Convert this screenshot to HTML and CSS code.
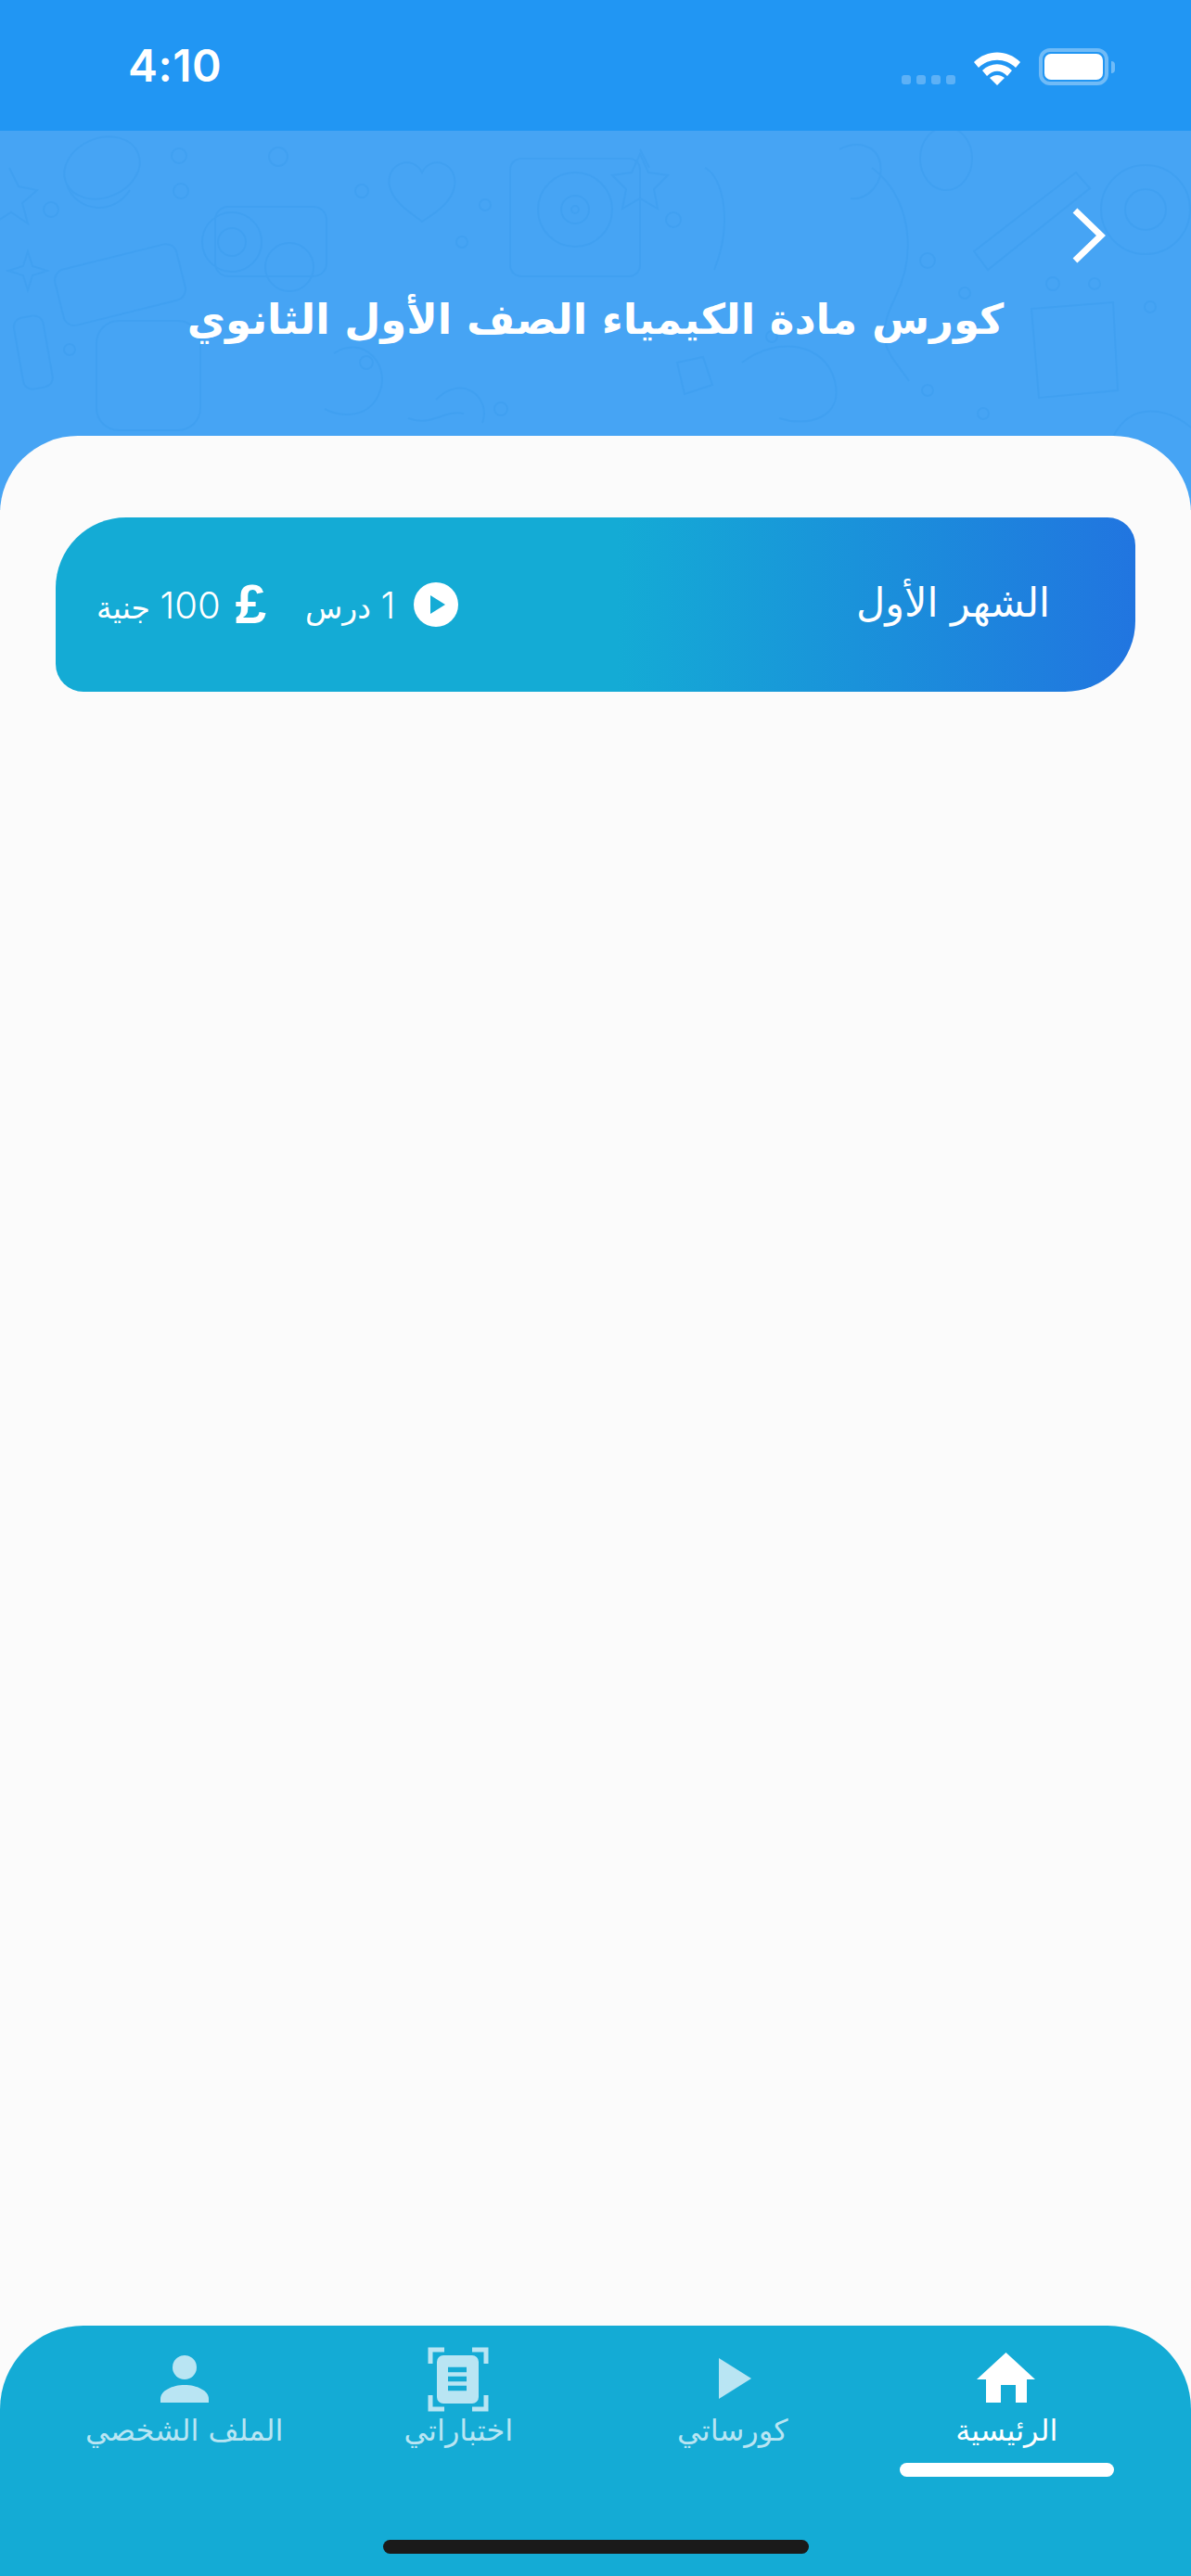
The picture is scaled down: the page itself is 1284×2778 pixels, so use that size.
FILE: index.html
```html
<!DOCTYPE html>
<html lang="ar" dir="rtl">
<head>
  <meta charset="UTF-8" />
  <meta name="viewport" content="width=device-width, initial-scale=1" />
  <title>كورس مادة الكيمياء</title>
  <link rel="stylesheet" href="styles.css">
</head>
<body>
  <div class="status-bar" dir="ltr">
    <span class="time">4:10</span>
    <div class="status-icons">
      <div class="signal"><i></i><i></i><i></i><i></i></div>
      <svg class="wifi" viewBox="0 0 52 38">
        <path d="M1 13 C15 -1 37 -1 51 13 L46 19 C35 8 17 8 6 19 Z" fill="#fff"/>
        <path d="M10 22 C19 13 33 13 42 22 L37 28 C30 21 22 21 15 28 Z" fill="#fff"/>
        <path d="M18 30 C23 26 29 26 34 30 L26 38 Z" fill="#fff"/>
      </svg>
      <div class="battery"><div class="battery-fill"></div></div>
      <div class="battery-tip"></div>
    </div>
  </div>

  <header class="course-header">
    <!-- faint doodles behind the title -->
    <svg class="doodles" viewBox="0 0 1284 409" preserveAspectRatio="none">
      <g fill="none" stroke="#40a0f1" stroke-width="2">
        <rect x="550" y="30" width="140" height="127" rx="12"/>
        <circle cx="620" cy="85" r="40"/>
        <circle cx="620" cy="85" r="15"/>
        <circle cx="620" cy="85" r="4"/>
        <path d="M690 25 l9 20 21 3 -15 15 4 21 -19 -11 -19 11 4 -21 -15 -15 21 -3 z"/>
        <path d="M455 45 c-10 -20 -40 -10 -35 15 c4 18 25 30 35 38 c12 -8 32 -20 35 -38 c4 -25 -25 -35 -35 -15 z"/>
        <rect x="232" y="82" width="120" height="75" rx="14"/>
        <circle cx="250" cy="120" r="32"/>
        <circle cx="250" cy="120" r="15"/>
        <circle cx="312" cy="147" r="26"/>
        <rect x="62" y="135" width="135" height="62" rx="12" transform="rotate(-14 130 166)"/>
        <rect x="104" y="205" width="112" height="118" rx="24"/>
        <ellipse cx="110" cy="40" rx="42" ry="32" transform="rotate(-22 110 40)"/>
        <path d="M72 58 c10 30 50 34 68 6"/>
        <circle cx="1235" cy="85" r="48"/>
        <circle cx="1235" cy="85" r="22"/>
        <path d="M1050 130 L1160 45 L1175 62 L1065 150 Z"/>
        <path d="M940 40 c40 30 50 90 25 140 s-5 60 15 90"/>
        <path d="M1112 192 L1200 185 L1205 280 L1120 288 Z"/>
        <path d="M905 20 c18 -10 40 -5 44 15 s-12 40 -32 38"/>
        <ellipse cx="1020" cy="30" rx="28" ry="34"/>
        <path d="M1200 330 c20 -40 60 -30 84 -10"/>
        <path d="M10 40 l10 20 20 4 -16 14 6 22 -18 -12 -16 10"/>
        <path d="M30 130 l5 16 16 5 -16 5 -5 16 -5 -16 -16 -5 16 -5 z"/>
        <rect x="20" y="200" width="32" height="78" rx="10" transform="rotate(-10 36 240)"/>
        <path d="M360 240 c30 -20 60 10 50 40 s-40 30 -60 20"/>
        <path d="M800 250 c40 -30 90 -20 100 20 s-30 50 -60 40"/>
        <path d="M470 290 c30 -30 60 0 50 25 M440 310 c25 10 40 -10 60 -5"/>
        <path d="M700 40 l-10 -20 M760 40 c20 10 30 60 10 110"/>
        <path d="M730 250 l28 -6 10 30 -30 10 z"/>
        <g>
          <circle cx="55" cy="85" r="8"/>
          <circle cx="193" cy="27" r="8"/>
          <circle cx="300" cy="28" r="10"/>
          <circle cx="390" cy="65" r="7"/>
          <circle cx="195" cy="65" r="8"/>
          <circle cx="75" cy="236" r="6"/>
          <circle cx="523" cy="80" r="6"/>
          <circle cx="498" cy="120" r="6"/>
          <circle cx="726" cy="96" r="8"/>
          <circle cx="832" cy="222" r="6"/>
          <circle cx="1000" cy="140" r="8"/>
          <circle cx="1040" cy="175" r="6"/>
          <circle cx="1135" cy="165" r="7"/>
          <circle cx="1180" cy="165" r="6"/>
          <circle cx="540" cy="300" r="7"/>
          <circle cx="395" cy="250" r="7"/>
          <circle cx="1240" cy="190" r="6"/>
          <circle cx="1000" cy="280" r="6"/>
          <circle cx="1060" cy="305" r="6"/>
        </g>
      </g>
    </svg>
    <div class="header-top">
      <svg class="back" viewBox="0 0 36 60"><path d="M3 3 L31 30 L3 57" fill="none" stroke="#fff" stroke-width="7"/></svg>
    </div>
    <h1 class="course-title">كورس مادة الكيمياء الصف الأول الثانوي</h1>
  </header>

  <main class="sheet">
    <div class="month-card">
      <span class="month-name">الشهر الأول</span>
      <div class="month-meta">
        <div class="meta-item">
          <svg class="play-circle" viewBox="0 0 48 48"><circle cx="24" cy="24" r="24" fill="#fff"/><path d="M18 14 L34 24 L18 34 Z" fill="#14abd5"/></svg>
          <span><span class="num">1</span> درس</span>
        </div>
        <div class="meta-item price">
          <span class="pound">£</span>
          <span><span class="num">100</span> جنية</span>
        </div>
      </div>
    </div>
  </main>

  <nav class="tab-bar">
    <div class="tabs">
      <a class="tab active">
        <svg class="tab-icon" viewBox="0 0 70 70"><path d="M34.5 6 L66 35 H57 V60 H45 V41 H29 V60 H13 V35 H3 Z" fill="currentColor"/></svg>
        <span class="tab-label">الرئيسية</span>
        <div class="tab-mark"></div>
      </a>
      <a class="tab">
        <svg class="tab-icon" viewBox="0 0 70 70"><path d="M20 12 L55 34 L20 56 Z" fill="currentColor"/></svg>
        <span class="tab-label">كورساتي</span>
      </a>
      <a class="tab">
        <svg class="tab-icon" viewBox="0 0 70 70">
          <path d="M5 18 V3 H20 M50 3 H65 V18 M5 52 V67 H20 M50 67 H65 V52" fill="none" stroke="currentColor" stroke-width="5"/>
          <rect x="12" y="9" width="45" height="52" rx="7" fill="currentColor"/>
          <path d="M24 24.5 H44 M24 34.5 H44 M24 44.5 H44" stroke="#14abd5" stroke-width="5.5"/>
        </svg>
        <span class="tab-label">اختباراتي</span>
      </a>
      <a class="tab">
        <svg class="tab-icon" viewBox="0 0 70 70"><ellipse cx="35" cy="22" rx="13" ry="13" fill="currentColor"/><path d="M9 60 V56 C9 47 22 41 35 41 C48 41 61 47 61 56 V60 Z" fill="currentColor"/></svg>
        <span class="tab-label">الملف الشخصي</span>
      </a>
    </div>
    <div class="home-indicator"></div>
  </nav>
</body>
</html>
```

FILE: styles.css
```css
* {
  margin: 0;
  padding: 0;
  box-sizing: border-box;
}
html, body {
  height: 100%;
}
body {
  display: flex;
  flex-direction: column;
  min-height: 100vh;
  background-color: #fbfbfb;
  color: #fff;
  font-family: "DejaVu Sans", sans-serif;
  overflow: hidden;
}

/* status bar */
.status-bar {
  height: 141px;
  flex-shrink: 0;
  background-color: #2196f3;
  display: flex;
  justify-content: space-between;
  align-items: center;
  padding: 2px 82px 0 138px;
}
.time {
  font-family: Inter, sans-serif;
  font-size: 48px;
  font-weight: 600;
  letter-spacing: 0.5px;
  margin-top: -3px;
}
.status-icons {
  display: flex;
  align-items: flex-end;
}
.signal {
  display: flex;
  gap: 6px;
  margin: 0 19px 1px 0;
}
.signal i {
  width: 10px;
  height: 10px;
  border-radius: 3px;
  background-color: #5db1f6;
}
.wifi {
  width: 52px;
  height: 38px;
  margin-right: 19px;
}
.battery {
  width: 75px;
  height: 40px;
  border: 4px solid #70bbf7;
  border-radius: 12px;
  padding: 2px;
}
.battery-fill {
  height: 100%;
  background-color: #fff;
  border-radius: 7px;
}
.battery-tip {
  width: 4px;
  height: 13px;
  background-color: #70bbf7;
  border-radius: 0 6px 6px 0;
  margin: 0 0 13px 3px;
}

/* header */
.course-header {
  position: relative;
  height: 409px;
  flex-shrink: 0;
  background-color: #46a4f4;
  padding: 83px 92px 0 0;
}
.doodles {
  position: absolute;
  inset: 0;
  width: 100%;
  height: 100%;
}
.header-top {
  position: relative;
  display: flex;
}
.back {
  width: 36px;
  height: 60px;
}
.course-title {
  position: relative;
  margin: 26px 0 0 0;
  margin-right: -92px;
  text-align: center;
  font-size: 45px;
  font-weight: 700;
  line-height: 70px;
}

/* content */
.sheet {
  position: relative;
  flex: 1;
  margin-top: -80px;
  padding: 88px 60px 0;
  background-color: #fbfbfb;
  border-radius: 84px 84px 0 0;
}
.month-card {
  height: 188px;
  display: flex;
  justify-content: space-between;
  align-items: center;
  padding: 0 92px 0 44px;
  background: linear-gradient(to right, #14abd5 0%, #14abd5 52%, #2175e0 100%);
  border-radius: 76px 30px 76px 30px;
}
.month-name {
  font-size: 43px;
  padding-bottom: 4px;
}
.month-meta {
  display: flex;
  align-items: center;
  gap: 42px;
}
.meta-item {
  display: flex;
  align-items: center;
  gap: 20px;
  font-size: 33px;
}
.num {
  font-family: Inter, sans-serif;
  font-size: 40px;
  font-weight: 300;
}
.play-circle {
  width: 48px;
  height: 48px;
}
.pound {
  font-family: "Liberation Sans", sans-serif;
  font-size: 60px;
  font-weight: 700;
  line-height: 1;
}
.price {
  gap: 16px;
}

/* bottom tabs */
.tab-bar {
  height: 270px;
  flex-shrink: 0;
  background-color: #14abd5;
  border-radius: 90px 90px 0 0;
  padding: 23px 51px 24px;
  display: flex;
  flex-direction: column;
  justify-content: space-between;
}
.tabs {
  display: grid;
  grid-template-columns: repeat(4, 1fr);
}
.tab {
  display: flex;
  flex-direction: column;
  align-items: center;
  color: #b9e5f3;
  font-size: 32px;
}
.tab.active {
  color: #fff;
}
.tab-icon {
  width: 70px;
  height: 70px;
}
.tab-label {
  line-height: 40px;
}
.tab-mark {
  width: 231px;
  height: 15px;
  margin-top: 15px;
  border-radius: 8px;
  background-color: #fff;
}
.home-indicator {
  width: 459px;
  height: 15px;
  margin: 0 auto;
  background-color: #1a1a1a;
  border-radius: 8px;
}
```
